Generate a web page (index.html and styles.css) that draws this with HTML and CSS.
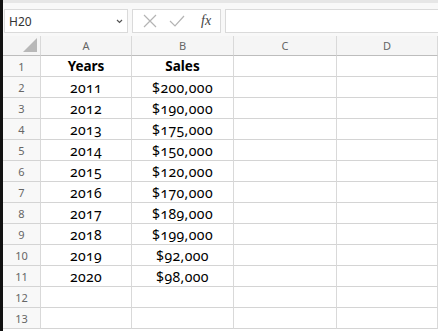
FILE: index.html
```html
<!DOCTYPE html>
<html lang="en">
<head>
    <meta charset="UTF-8">
    <title>Sales by Year</title>
    <link rel="stylesheet" href="styles.css">
</head>
<body>
    <div class="window">
        <div class="formula-bar">
            <div class="name-box">
                <span>H20</span>
                <svg class="chevron" width="7" height="5" viewBox="0 0 7 5"><path d="M1 1 L3.5 3.5 L6 1" fill="none" stroke="#555" stroke-width="1.2"/></svg>
            </div>
            <div class="fx-buttons">
                <svg width="14" height="14" viewBox="0 0 14 14"><path d="M1 1 L13 13 M13 1 L1 13" stroke="#b4b4b4" stroke-width="1.2"/></svg>
                <svg width="16" height="14" viewBox="0 0 16 14"><path d="M1 7 L6 12 L15 2" fill="none" stroke="#b4b4b4" stroke-width="1.2"/></svg>
                <span class="fx">fx</span>
            </div>
            <div class="formula-input"></div>
        </div>

        <div class="sheet">
            <div class="corner"><span class="triangle"></span></div>
            <div class="col-head">A</div>
            <div class="col-head">B</div>
            <div class="col-head">C</div>
            <div class="col-head">D</div>

            <div class="row-head">1</div>
            <div class="cell bold">Years</div>
            <div class="cell bold">Sales</div>
            <div class="cell"></div>
            <div class="cell"></div>

            <div class="row-head">2</div>
            <div class="cell">2011</div>
            <div class="cell">$200,000</div>
            <div class="cell"></div>
            <div class="cell"></div>

            <div class="row-head">3</div>
            <div class="cell">2012</div>
            <div class="cell">$190,000</div>
            <div class="cell"></div>
            <div class="cell"></div>

            <div class="row-head">4</div>
            <div class="cell">2013</div>
            <div class="cell">$175,000</div>
            <div class="cell"></div>
            <div class="cell"></div>

            <div class="row-head">5</div>
            <div class="cell">2014</div>
            <div class="cell">$150,000</div>
            <div class="cell"></div>
            <div class="cell"></div>

            <div class="row-head">6</div>
            <div class="cell">2015</div>
            <div class="cell">$120,000</div>
            <div class="cell"></div>
            <div class="cell"></div>

            <div class="row-head">7</div>
            <div class="cell">2016</div>
            <div class="cell">$170,000</div>
            <div class="cell"></div>
            <div class="cell"></div>

            <div class="row-head">8</div>
            <div class="cell">2017</div>
            <div class="cell">$189,000</div>
            <div class="cell"></div>
            <div class="cell"></div>

            <div class="row-head">9</div>
            <div class="cell">2018</div>
            <div class="cell">$199,000</div>
            <div class="cell"></div>
            <div class="cell"></div>

            <div class="row-head">10</div>
            <div class="cell">2019</div>
            <div class="cell">$92,000</div>
            <div class="cell"></div>
            <div class="cell"></div>

            <div class="row-head">11</div>
            <div class="cell">2020</div>
            <div class="cell">$98,000</div>
            <div class="cell"></div>
            <div class="cell"></div>

            <div class="row-head">12</div>
            <div class="cell"></div>
            <div class="cell"></div>
            <div class="cell"></div>
            <div class="cell"></div>

            <div class="row-head">13</div>
            <div class="cell"></div>
            <div class="cell"></div>
            <div class="cell"></div>
            <div class="cell"></div>
        </div>
    </div>
</body>
</html>
```

FILE: styles.css
```css
body {
    margin: 0;
    background-color: #ffffff;
    font-family: 'Noto Sans', sans-serif;
    overflow: hidden;
}

.window {
    border-left: 3px solid #111;
    height: 331px;
    box-sizing: border-box;
    background-color: #ffffff;
}

.formula-bar {
    display: flex;
    align-items: center;
    gap: 4px;
    height: 36px;
    padding: 3px 0 0 1px;
    box-sizing: border-box;
    background-color: #f8f8f8;
    border-top: 3px solid #e6e6e6;
}

.name-box {
    display: flex;
    align-items: center;
    justify-content: space-between;
    width: 124px;
    height: 24px;
    box-sizing: border-box;
    padding: 0 4px 0 4px;
    background-color: #ffffff;
    border: 1px solid #dadada;
    font-size: 12px;
    color: #333;
}

.fx-buttons {
    display: flex;
    align-items: center;
    gap: 12px;
    width: 89px;
    height: 24px;
    box-sizing: border-box;
    padding: 0 6px 0 10px;
    background-color: #ffffff;
    border: 1px solid #dadada;
}

.fx {
    font-family: 'Liberation Serif', serif;
    font-style: italic;
    font-size: 14px;
    color: #444;
    margin-left: 4px;
}

.formula-input {
    flex: 1;
    height: 24px;
    background-color: #ffffff;
    border: 1px solid #dadada;
    border-right: none;
    box-sizing: border-box;
}

.sheet {
    display: grid;
    grid-template-columns: 38px 91px 102px 103px 1fr;
    grid-template-rows: 20px repeat(13, 21px);
}

.corner,
.col-head,
.row-head,
.cell {
    border-right: 1px solid #d9d9d9;
    border-bottom: 1px solid #d4d4d4;
    box-sizing: border-box;
    display: flex;
    align-items: center;
    justify-content: center;
}

.corner,
.col-head {
    background-color: #f5f5f5;
    border-bottom-color: #bdbdbd;
}

.col-head,
.row-head {
    font-size: 11px;
    color: #666;
}

.row-head {
    background-color: #f8f8f8;
}

.corner {
    position: relative;
}

.triangle {
    position: absolute;
    right: 3px;
    bottom: 3px;
    width: 0;
    height: 0;
    border-left: 14px solid transparent;
    border-bottom: 14px solid #b8b8b8;
}

.cell {
    font-size: 14px;
    letter-spacing: 0.4px;
    color: #000;
    font-variant-numeric: oldstyle-nums;
    font-feature-settings: "onum";
}

.bold {
    font-weight: bold;
    font-size: 13.5px;
    letter-spacing: 0;
}
```
